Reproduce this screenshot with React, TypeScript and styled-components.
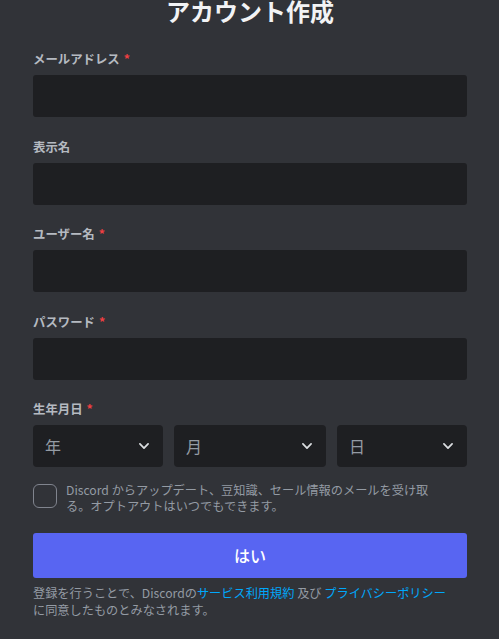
import React from "react";
import styled, { createGlobalStyle } from "styled-components";

const GlobalStyle = createGlobalStyle`
  html, body {
    margin: 0;
    padding: 0;
    background: #313338;
  }
  body {
    font-family: "Noto Sans", "Noto Sans CJK JP", sans-serif;
  }
`;

const fields = [
  { label: "メールアドレス", required: true },
  { label: "表示名", required: false },
  { label: "ユーザー名", required: true },
  { label: "パスワード", required: true },
];

export default function App() {
  return (
    <Page>
      <GlobalStyle />
      <Title>アカウント作成</Title>
      {fields.map((f) => (
        <Field key={f.label}>
          <Label>
            {f.label}
            {f.required && <Star>*</Star>}
          </Label>
          <Input />
        </Field>
      ))}
      <Field>
        <Label>
          生年月日<Star>*</Star>
        </Label>
        <DateRow>
          <Select>
            <span>年</span>
            <Chevron />
          </Select>
          <Select>
            <span>月</span>
            <Chevron />
          </Select>
          <Select>
            <span>日</span>
            <Chevron />
          </Select>
        </DateRow>
      </Field>
      <CheckRow>
        <Box />
        <CheckText>
          Discord からアップデート、豆知識、セール情報のメールを受け取る。オプトアウトはいつでもできます。
        </CheckText>
      </CheckRow>
      <Button>はい</Button>
      <Terms>
        登録を行うことで、Discordの<Link>サービス利用規約</Link> 及び{" "}
        <Link>プライバシーポリシー</Link>に同意したものとみなされます。
      </Terms>
    </Page>
  );
}

function Chevron() {
  return (
    <svg width="14" height="14" viewBox="0 0 24 24" fill="none">
      <path
        d="M5 8.5l7 7 7-7"
        stroke="#dbdee1"
        strokeWidth="3"
        strokeLinecap="round"
        strokeLinejoin="round"
      />
    </svg>
  );
}

const Page = styled.div`
  display: flex;
  flex-direction: column;
  padding: 0 32px 0 33px;
  height: 639px;
  box-sizing: border-box;
  overflow: hidden;
`;

const Title = styled.h1`
  margin: -4px 0 25px;
  text-align: center;
  font-family: "Noto Sans CJK JP", sans-serif;
  font-size: 24px;
  line-height: 30px;
  font-weight: 700;
  color: #f2f3f5;
`;

const Field = styled.div`
  display: flex;
  flex-direction: column;
  margin-bottom: 21.5px;
`;

const Label = styled.label`
  font-family: "Noto Sans CJK JP", sans-serif;
  font-size: 12.4px;
  line-height: 16px;
  font-weight: 700;
  color: #b5bac1;
  margin-bottom: 8px;
`;

const Star = styled.span`
  color: #f23f42;
  padding-left: 4px;
`;

const Input = styled.div`
  height: 42px;
  background: #1e1f22;
  border-radius: 3px;
`;

const DateRow = styled.div`
  display: grid;
  grid-template-columns: 130px 1fr 130px;
  gap: 11px;
`;

const Select = styled.div`
  height: 42px;
  background: #1e1f22;
  border-radius: 4px;
  display: flex;
  align-items: center;
  justify-content: space-between;
  padding: 0 12px 0 12px;
  font-family: "Noto Sans CJK JP", sans-serif;
  font-size: 16px;
  color: #949ba4;
`;

const CheckRow = styled.div`
  display: flex;
  align-items: flex-start;
  gap: 9px;
  margin-top: -7px;
`;

const Box = styled.div`
  flex: none;
  width: 22px;
  height: 22px;
  border: 1px solid #80848e;
  border-radius: 6px;
  margin-top: 2px;
`;

const CheckText = styled.div`
  font-family: "Noto Sans CJK JP", sans-serif;
  font-size: 12.2px;
  line-height: 16px;
  color: #949ba4;
  padding-right: 28px;
`;

const Button = styled.button`
  margin-top: 19px;
  height: 45px;
  border: none;
  border-radius: 3px;
  background: #5865f2;
  color: #fff;
  font-family: "Noto Sans CJK JP", sans-serif;
  font-size: 16px;
  font-weight: 500;
`;

const Terms = styled.div`
  margin-top: 7px;
  padding-right: 18px;
  font-family: "Noto Sans CJK JP", sans-serif;
  font-size: 12.2px;
  line-height: 17px;
  color: #949ba4;
`;

const Link = styled.a`
  color: #00a8fc;
`;
